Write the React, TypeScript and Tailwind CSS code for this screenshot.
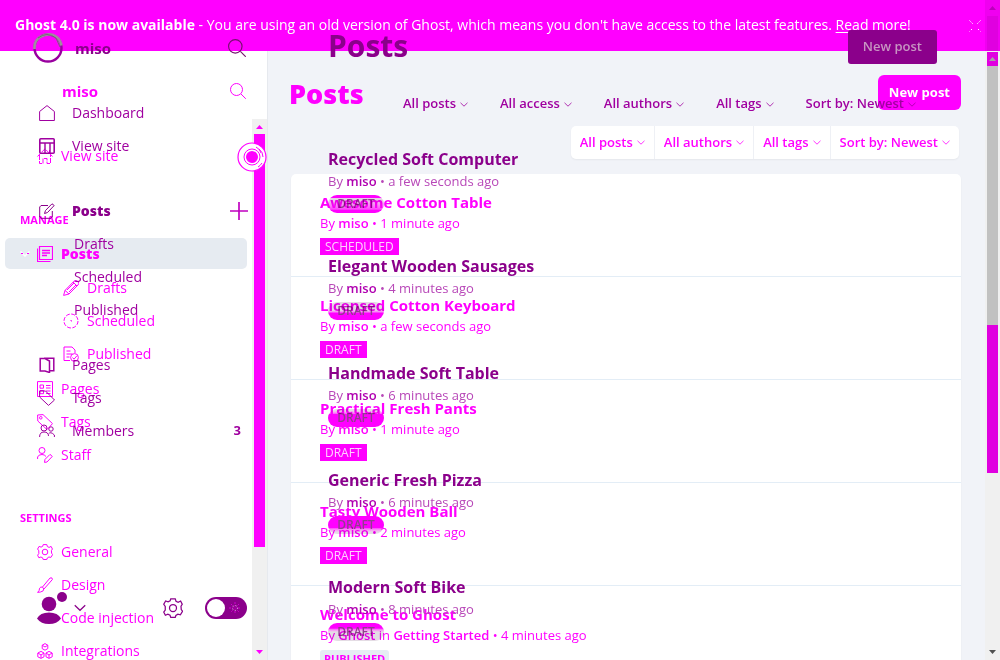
import React from "react";

type IconProps = { children: React.ReactNode; className?: string };

function Icon({ children, className = "size-4" }: IconProps) {
  return (
    <svg
      viewBox="0 0 16 16"
      fill="none"
      stroke="currentColor"
      strokeWidth="1"
      aria-hidden="true"
      className={`shrink-0 ${className}`}
    >
      {children}
    </svg>
  );
}

const paths = {
  search: (
    <>
      <circle cx="6.5" cy="6.5" r="6" />
      <path d="M11 11l4.8 4.8" />
    </>
  ),
  home: <path d="M.5 8.5L8 .8l7.5 7.7M2.5 7v8.5h3.500v-5h4v5h3.500V7M12.500 5V2" strokeDasharray="5 1" />,
  house: <path d="M.6 15.500V6.500L8 .6l7.400 5.900v9z" />,
  layout: (
    <>
      <rect x=".8" y=".8" width="14.400" height="14.400" rx="1" strokeWidth="1.600" />
      <path d="M1 5h14M6 5v10M11 5v10" strokeWidth="1.400" />
    </>
  ),
  stack: (
    <>
      <path d="M2.500.5h13v13h-13zM.5 2.500v13h13" strokeWidth="1.200" />
      <path d="M5 4.500h8M5 7h8M5 9.500h5" strokeWidth="1.300" />
    </>
  ),
  compose: (
    <>
      <path d="M9 2.500H2L.7 4v10L2 15.300h10l1.300-1.300V8" />
      <path d="M5.500 10.500l1-3L13 .8l2.200 1.700L8.500 9.500z" />
    </>
  ),
  pencil: <path d="M.6 15.400l1.400-5L11 1.200Q13.500-.5 15 1.500t0 3.500L6 14zM2 10.400l4 3.600M4 10l7-7M6 12l7-7M10 2l4 4" />,
  clock: (
    <>
      <circle cx="8" cy="8" r="7" strokeDasharray="4 1.500" />
      <path d="M7.500 7.500h1v1" />
    </>
  ),
  published: (
    <>
      <path d="M7 14.500H1V1h8l3 3v3M3.500 5h4M3.500 8h6M3.500 11h3" />
      <circle cx="11.500" cy="11.500" r="3.900" />
      <path d="M9.500 11.500l1.500 1.700 3-3.500" />
    </>
  ),
  news: (
    <>
      <path d="M.5.6h15v14.900H.5z" />
      <path d="M3 4h3.500v3.200H3zM3 9.500h3.500v3.200H3zM9 4.500h4.500M9 7h4.500M9 10h4.500M9 12.500h4.500" />
    </>
  ),
  book: <path d="M5 1.200h9.800v12.600h-4M1.200 1.500H6l4.500 2.500v11.500L6 14H1.200z" strokeWidth="1.500" />,
  tag: (
    <>
      <path d="M.6 1L6 .6l9.500 9-5.500 6L.8 7z" />
      <circle cx="3.800" cy="3.800" r="1.300" />
    </>
  ),
  tagPlain: <path d="M.6 1h5.900l9 9-6 5.400L.6 7z" />,
  members: (
    <>
      <circle cx="5" cy="5" r="3" />
      <path d="M.6 14q0-5 4.400-5t4.500 4M9.500 11q2-3 5.900 1v2" />
      <circle cx="12" cy="6" r="2.200" />
    </>
  ),
  staff: (
    <>
      <circle cx="5" cy="3.500" r="3" />
      <path d="M.6 12V10Q1.500 7.500 5 7.500q2.500 0 4 2M7.500 15.400l.500-3 5-5 2.300 2L10 15z" />
    </>
  ),
  gear: (
    <>
      <path d="M6.200.6h3.600l.6 2 1.700.8 2-1 1.300 2.600-1 1.600.2 2.600 1 1.400-1.700 2.800-2-.4-1.600 1-.5 1.500H6.200l-.6-1.700-1.700-.8-2 .8L.6 11.200l1.200-1.600V6.800L.6 5l1.500-2.600 2 .7 1.600-.8z" />
      <circle cx="8" cy="8" r="2.800" />
    </>
  ),
  brush: <path d="M.6 15.400q3 0 5.500-1.500 1.500-2-.5-3.700-2-.8-3 1Q2.500 14 .6 15.400M5.500 10L13 1q2.500-1 2.400 1.500L7 12" />,
  boxes: (
    <>
      <path d="M8 .6l2.800 1.600v3.400L8 7.200 5.200 5.600V2.200zM4 8.400L7 10v3.800l-3 1.600-3.200-1.600V10zM12 8.400l3.200 1.600v3.800L12 15.400l-3-1.600V10z" />
      <path d="M5.200 2.200L8 4l2.800-1.800M1 10l3 2 3-2M9 10l3 2 3-2M4 12v3M12 12v3" />
    </>
  ),
  plus: <path d="M8 0v16M0 8h16" strokeWidth="1.500" />,
};

function Chevron({ className = "w-2" }: { className?: string }) {
  return (
    <svg viewBox="0 0 8 5" fill="none" stroke="currentColor" strokeWidth=".8" aria-hidden="true" className={`shrink-0 ${className}`}>
      <path d="M.5.8L4 4.200 7.500.8" />
    </svg>
  );
}

function Triangle({ down, className = "" }: { down?: boolean; className?: string }) {
  return (
    <svg viewBox="0 0 7 4" aria-hidden="true" className={`h-1 w-[7px] shrink-0 ${className}`}>
      <path d={down ? "M0 0h7L3.500 4z" : "M0 4h7L3.500 0z"} fill="currentColor" />
    </svg>
  );
}

function Filter({ name }: { name: string }) {
  return (
    <label className="flex items-center gap-1">
      <select aria-label={name} className="appearance-none bg-transparent font-semibold outline-none [field-sizing:content]">
        <option>{name}</option>
      </select>
      <Chevron />
    </label>
  );
}

function NavRow({ icon, label }: { icon: React.ReactNode; label: string }) {
  return (
    <li>
      <a href="#" className="flex h-[33px] items-center gap-2 pl-[37px]">
        <Icon>{icon}</Icon>
        {label}
      </a>
    </li>
  );
}

function SubRow({ icon, label }: { icon: React.ReactNode; label: string }) {
  return (
    <li>
      <a href="#" className="flex h-[33px] items-center gap-2 pl-[63px]">
        <Icon>{icon}</Icon>
        {label}
      </a>
    </li>
  );
}

const currentPosts = [
  { title: "Awesome Cotton Table", author: "miso", time: "1 minute ago", status: "SCHEDULED" },
  { title: "Licensed Cotton Keyboard", author: "miso", time: "a few seconds ago", status: "DRAFT" },
  { title: "Practical Fresh Pants", author: "miso", time: "1 minute ago", status: "DRAFT" },
  { title: "Tasty Wooden Ball", author: "miso", time: "2 minutes ago", status: "DRAFT" },
  { title: "Welcome to Ghost", author: "Ghost", topic: "Getting Started", time: "4 minutes ago", status: "PUBLISHED" },
];

const previousPosts = [
  { title: "Recycled Soft Computer", time: "a few seconds ago", badge: "bg-linear-to-b from-[#ff00ff] from-15% via-[#e0dce0] via-20% to-[#ff00ff] to-85%" },
  { title: "Elegant Wooden Sausages", time: "4 minutes ago", badge: "bg-linear-to-b from-[#e4dce4] from-45% to-[#ff00ff] to-60%" },
  { title: "Handmade Soft Table", time: "6 minutes ago", badge: "bg-linear-to-b from-[#e4dce4] from-10% to-[#ff00ff] to-30%" },
  { title: "Generic Fresh Pizza", time: "6 minutes ago", badge: "bg-linear-to-b from-[#ff00ff] from-65% to-[#e4dce4] to-90%" },
  { title: "Modern Soft Bike", time: "8 minutes ago", badge: "bg-linear-to-b from-[#ff00ff] from-30% to-[#e4dce4] to-50%" },
];

function CurrentLayer() {
  return (
    <div className="col-start-1 row-start-1 flex min-h-0 flex-col text-[#ff00ff]">
      <div className="flex h-[51px] shrink-0 bg-[#ff00ff] text-white">
        <p className="flex-1 self-center truncate pb-0.5 pl-[15px]">
          <strong className="font-bold">Ghost 4.0 is now available</strong> - You are using an old version of Ghost, which
          means you don't have access to the latest features.{" "}
          <a href="#" className="underline underline-offset-2">
            Read more!
          </a>
        </p>
        <button aria-label="Close" className="mr-1 flex w-3 items-center">
          <svg viewBox="0 0 12 12" className="size-3" fill="none" stroke="#fff" strokeDasharray="1.500 1.500 1.500 7.500">
            <path d="M.5.5l11 11M11.500.5l-11 11" />
          </svg>
        </button>
        <div className="flex w-[15px] flex-col items-center bg-[#f000f0]">
          <Triangle className="my-1.5 text-[#bb00bb]" />
          <div className="w-[11px] flex-1 bg-[#e000e0]" />
        </div>
      </div>

      <div className="flex min-h-0 flex-1">
        <aside className="flex w-[268px] shrink-0 flex-col border-r border-[#e6e9ee] bg-white">
          <div className="flex h-[68px] shrink-0 items-center justify-between pt-3 pr-[21px] pl-[62px]">
            <strong className="text-[15px] font-bold">miso</strong>
            <button aria-label="Search">
              <Icon>{paths.search}</Icon>
            </button>
          </div>
          <div className="flex min-h-0 flex-1">
            <nav className="flex-1 overflow-hidden pt-5">
              <ul>
                <NavRow icon={paths.home} label="View site" />
              </ul>
              <h2 className="mt-8 flex h-[33px] items-center pl-5 text-[11px] font-bold">MANAGE</h2>
              <ul>
                <li>
                  <a
                    href="#"
                    className="mx-[5px] my-px flex h-[31px] items-center gap-2 rounded-[5px] bg-[#e6ebf1] pl-[15px] font-extrabold"
                  >
                    <svg viewBox="0 0 10 6" className="mr-[-1px] w-2.5 shrink-0" fill="none" aria-hidden="true">
                      <path d="M.5.5l4.500 4.500L9.500.5" stroke="#fff" strokeWidth="1.500" />
                      <path d="M1 2.500h2M7 2.500h2" stroke="currentColor" />
                    </svg>
                    <Icon>{paths.stack}</Icon>
                    Posts
                  </a>
                  <ul className="pt-px pb-0.5">
                    <SubRow icon={paths.pencil} label="Drafts" />
                    <SubRow icon={paths.clock} label="Scheduled" />
                    <SubRow icon={paths.published} label="Published" />
                  </ul>
                </li>
                <NavRow icon={paths.news} label="Pages" />
                <NavRow icon={paths.tag} label="Tags" />
                <NavRow icon={paths.staff} label="Staff" />
              </ul>
              <h2 className="mt-[31px] flex h-[33px] items-center pl-5 text-[11px] font-bold">SETTINGS</h2>
              <ul>
                <NavRow icon={paths.gear} label="General" />
                <NavRow icon={paths.brush} label="Design" />
                <NavRow icon={null} label="Code injection" />
                <NavRow icon={paths.boxes} label="Integrations" />
              </ul>
            </nav>
            <div className="relative flex w-[15px] shrink-0 flex-col items-center bg-[#f0f0f0] py-1.5">
              <Triangle />
              <div className="mt-[5px] h-[413px] w-[11px] bg-[#ff00ff]" />
              <Triangle down className="mt-auto" />
              <svg viewBox="0 0 30 30" className="absolute top-[23px] right-0 size-[30px]" fill="none" aria-hidden="true">
                <circle cx="15" cy="15" r="14" fill="#fff" stroke="currentColor" strokeWidth="1.200" />
                <circle cx="15" cy="15" r="8" stroke="currentColor" />
                <path d="M19 5q4 2 5 6M22 7q4 3 4 8M21 25q2-1 4-4" stroke="currentColor" />
                <circle cx="15" cy="15" r="6" fill="currentColor" />
              </svg>
            </div>
          </div>
        </aside>

        <main className="min-w-0 flex-1 overflow-hidden bg-[#f1f3f8] pt-6 pr-6 pl-[23px]">
          <header className="flex items-start justify-between">
            <h1 className="-ml-0.5 text-[27px] leading-[38px] font-extrabold">Posts</h1>
            <button className="h-[35px] rounded-[6px] bg-[#ff00ff] px-[11px] text-[13px] font-bold text-white">New post</button>
          </header>
          <div className="mt-[13px] mr-0.5 ml-auto flex h-[33px] w-fit divide-x divide-[#eef0f5] rounded-[5px] bg-white text-[13px] shadow-xs *:px-[9px]">
            <Filter name="All posts" />
            <Filter name="All authors" />
            <Filter name="All tags" />
            <Filter name="Sort by: Newest" />
          </div>
          <ul className="mt-[15px] rounded-[5px] bg-white text-[13px] shadow-xs">
            {currentPosts.map((post) => (
              <li key={post.title} className="h-[103px] border-b border-[#e3edf6] pt-[17px] pl-[29px]">
                <h3 className="text-[15px] leading-[22px] font-bold">{post.title}</h3>
                <p className="leading-5">
                  By <b className="font-semibold">{post.author}</b>
                  {post.topic && (
                    <>
                      {" "}
                      in <b className="font-semibold">{post.topic}</b>
                    </>
                  )}{" "}
                  • {post.time}
                </p>
                <span
                  className={
                    post.status === "PUBLISHED"
                      ? "mt-[5px] block h-[17px] w-fit rounded-[3px] bg-[#e6edf4] px-1 text-[11px] leading-[17px] font-bold"
                      : "mt-[5px] block h-[17px] w-fit bg-[#ff00ff] px-[5px] text-[12px] leading-[17px] text-[#ffd0ff]"
                  }
                >
                  {post.status}
                </span>
              </li>
            ))}
          </ul>
        </main>

        <div className="flex w-[15px] shrink-0 flex-col items-center bg-[#f0f0f0] pt-px pb-1.5">
          <div className="flex h-3.5 w-[11px] items-center justify-center bg-[#e000e0]">
            <Triangle className="text-[#a8a0a8]" />
          </div>
          <div className="h-[259px] w-[11px] bg-[#c1c1c1]" />
          <div className="h-[148px] w-[11px] bg-[#e000e0]" />
          <Triangle down className="mt-auto text-[#505050]" />
        </div>
      </div>
    </div>
  );
}

function MenuRow({ icon, label, children }: { icon: React.ReactNode; label: string; children?: React.ReactNode }) {
  return (
    <li className="flex h-[33px] items-center justify-between pr-5 pl-[39px]">
      <a href="#" className="flex items-center gap-[17px]">
        <Icon>{icon}</Icon>
        {label}
      </a>
      {children}
    </li>
  );
}

function PreviousLayer() {
  return (
    <div className="col-start-1 row-start-1 flex min-h-0 overflow-hidden text-[#a000a0]">
      <aside className="flex w-[268px] shrink-0 flex-col">
        <div className="flex h-24 shrink-0 items-center pr-[22px] pl-[33px]">
          <svg viewBox="0 0 30 30" className="size-[30px]" fill="none" aria-hidden="true">
            <circle cx="15" cy="15" r="13.500" stroke="#99009f" strokeWidth="2.400" />
            <path d="M1.500 16Q1 7 8 3.500T21 2.500q6 2.500 7.500 10" stroke="#a08ca0" strokeWidth="2.800" />
            <path d="M5 5q9-7 18 0l4 9" stroke="#7a607a" />
          </svg>
          <strong className="ml-3 text-[15px] font-bold text-[#8b008b]">miso</strong>
          <button aria-label="Search" className="ml-auto text-[#74106c]">
            <Icon className="size-[18px]">{paths.search}</Icon>
          </button>
        </div>
        <nav>
          <ul>
            <MenuRow icon={paths.house} label="Dashboard" />
            <MenuRow icon={paths.layout} label="View site" />
          </ul>
          <ul className="mt-8">
            <li className="flex h-[33px] items-center pr-5 pl-[39px] font-extrabold text-[#8b008b]">
              <a href="#" className="flex items-center gap-[17px]">
                <Icon>{paths.compose}</Icon>
                Posts
              </a>
              <button aria-label="Add post" className="ml-auto text-[#c000c0]">
                <Icon className="size-[18px]">{paths.plus}</Icon>
              </button>
            </li>
            {["Drafts", "Scheduled", "Published"].map((label) => (
              <li key={label} className="pl-[74px] leading-[33px]">
                <a href="#">{label}</a>
              </li>
            ))}
          </ul>
          <ul className="mt-[22px]">
            <MenuRow icon={paths.book} label="Pages" />
            <MenuRow icon={paths.tagPlain} label="Tags" />
            <MenuRow icon={paths.members} label="Members">
              <b className="mr-[7px] text-[13px] font-bold">3</b>
            </MenuRow>
          </ul>
        </nav>
        <footer className="mt-auto flex h-[104px] items-center pr-[21px] pl-[37px] text-[#8b008b]">
          <svg viewBox="0 0 31 32" className="h-8 w-[31px]" fill="currentColor" aria-hidden="true">
            <circle cx="12" cy="12" r="7.300" />
            <circle cx="25" cy="5" r="5" />
            <path d="M0 26.500Q3 20.500 12 20.500t12 6q-4 5.500-12 5.500T0 26.500z" />
          </svg>
          <Chevron className="ml-1.5 w-3" />
          <button aria-label="Settings" className="ml-auto">
            <Icon className="size-5">{paths.gear}</Icon>
          </button>
          <label className="ml-[22px] flex h-[22px] w-[42px] items-center justify-between rounded-full bg-[#8b008b] px-0.5 pr-1.5">
            <input type="checkbox" aria-label="Dark mode" className="size-[18px] appearance-none rounded-full bg-white" />
            <svg viewBox="0 0 12 12" className="size-3" fill="none" aria-hidden="true">
              <path d="M6 0v12M0 6h12M2 2l8 8M10 2l-8 8" stroke="#cf00cf" strokeDasharray="2 1" />
              <circle cx="6" cy="6" r="2.500" fill="#9c009c" stroke="#e8c8e8" strokeDasharray="1 2" />
            </svg>
          </label>
        </footer>
      </aside>

      <section className="min-w-0 flex-1 pl-[60px]">
        <header className="flex h-[94px] items-center justify-between pr-[63px]">
          <h2 className="-mt-1 text-[30px] font-bold text-[#8b008b]">Posts</h2>
          <button className="h-[34px] rounded-[3px] bg-[#8b008b] px-[15px] text-[13px] font-semibold text-[#c795c2]">
            New post
          </button>
        </header>
        <div className="flex h-5 items-center justify-end gap-8 pr-[84px] text-[13px]">
          <Filter name="All posts" />
          <Filter name="All access" />
          <Filter name="All authors" />
          <Filter name="All tags" />
          <Filter name="Sort by: Newest" />
        </div>
        <ul className="mt-[33px] text-[13px]">
          {previousPosts.map((post) => (
            <li key={post.title} className="h-[107px]">
              <h3 className="text-base leading-6 font-bold text-[#8b008b]">{post.title}</h3>
              <p className="leading-5 text-[#b848b8]">
                By <b className="font-semibold text-[#b000b0]">miso</b> • {post.time}
              </p>
              <span
                className={`mt-1 block h-[18px] w-[56px] rounded-full text-center text-[12px] leading-[18px] font-semibold text-[#90408c] mix-blend-multiply ${post.badge}`}
              >
                DRAFT
              </span>
            </li>
          ))}
        </ul>
      </section>
    </div>
  );
}

export default function App() {
  return (
    <div className="grid h-screen grid-cols-[minmax(0,1fr)] grid-rows-[minmax(0,1fr)] overflow-hidden bg-white font-['Open_Sans','Noto_Sans',sans-serif] text-[14px]">
      <CurrentLayer />
      <PreviousLayer />
    </div>
  );
}
